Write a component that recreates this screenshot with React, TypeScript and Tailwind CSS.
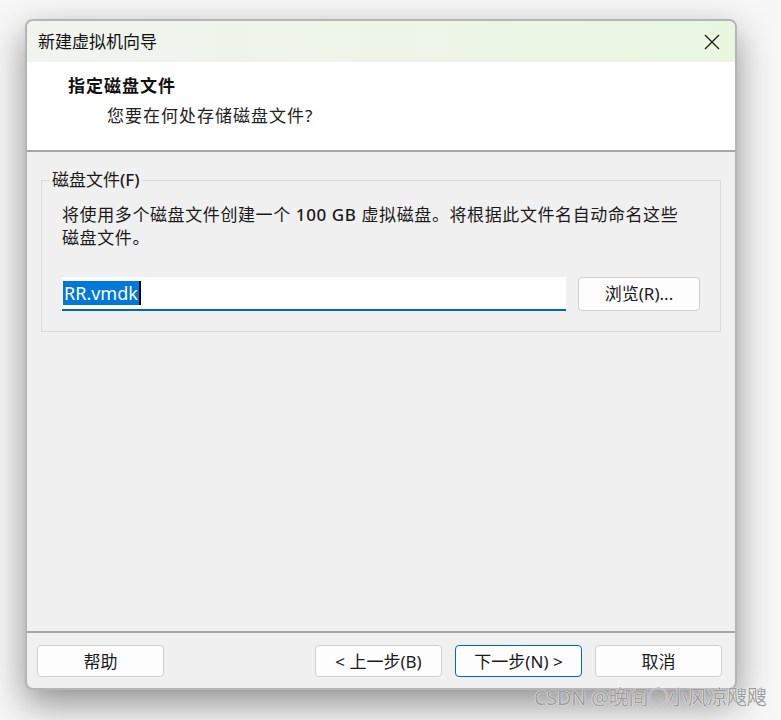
import React from 'react'

const cjk = { fontFamily: '"Noto Sans", "Noto Sans CJK SC", sans-serif' }

const Btn = ({ label, primary = false }: { label: string; primary?: boolean }) => (
  <button
    className={`h-[32px] w-[127px] rounded-[4px] border bg-[#fdfdfd] text-[17px] leading-none text-[#1a1a1a] ${
      primary ? 'border-[#0067c0]' : 'border-[#d0d0d0]'
    }`}
  >
    {label}
  </button>
)

export default function App() {
  return (
    <div className="relative h-[720px] w-[781px] overflow-hidden bg-[#f7f7f7]" style={cjk}>
      <div className="pl-[25px] pt-[19px]">
        <div className="flex h-[671px] w-[712px] flex-col overflow-hidden rounded-[8px] border-2 border-[#b5b5b5] bg-[#f0f0f0] shadow-[0_14px_36px_rgba(0,0,0,0.42)]">
          {/* title bar */}
          <div className="flex h-[41px] shrink-0 items-center justify-between bg-gradient-to-r from-[#f1f3ef] to-[#e9f7e1] pl-[11px] pr-[14px]">
            <span className="text-[17px] text-[#111]">新建虚拟机向导</span>
            <svg width="18" height="18" viewBox="0 0 18 18" className="text-[#1a1a1a]">
              <path d="M2 2 L16 16 M16 2 L2 16" stroke="currentColor" strokeWidth="1.3" fill="none" />
            </svg>
          </div>

          {/* header */}
          <div className="h-[90px] shrink-0 border-b-2 border-[#a6a6a6] bg-white pt-[12px]">
            <div className="pl-[41px] text-[17px] font-bold leading-[24px] tracking-[1px] text-[#111]">指定磁盘文件</div>
            <div className="mt-[6px] pl-[80px] text-[17px] leading-[24px] tracking-[1px] text-[#222]">您要在何处存储磁盘文件?</div>
          </div>

          {/* body */}
          <div className="flex-1 px-[14px] pt-[28px]">
            <div className="relative h-[152px] w-[680px] border border-[#dadada] px-[20px] pt-[22px]">
              <span className="absolute left-[8px] top-[-12px] bg-[#f0f0f0] px-[2px] text-[17px] leading-[22px] text-[#1a1a1a]">
                磁盘文件<span className="font-medium">(F)</span>
              </span>
              <p className="text-[17px] leading-[23px] tracking-[0.6px] text-[#1a1a1a]">
                将使用多个磁盘文件创建一个 <span className="font-medium">100 GB</span> 虚拟磁盘。将根据此文件名自动命名这些
                <br />
                磁盘文件。
              </p>
              <div className="mt-[28px] flex items-center gap-[12px]">
                <div className="flex h-[34px] w-[504px] items-center border-b-2 border-[#0067c0] bg-white pl-[1px]">
                  <span className="bg-[#0078d7] px-[1px] text-[18px] leading-[24px] text-white">RR.vmdk</span>
                  <span className="h-[24px] w-[2px] bg-black" />
                </div>
                <button className="h-[34px] w-[122px] rounded-[4px] border border-[#d0d0d0] bg-[#fdfdfd] text-[17px] text-[#1a1a1a]">
                  浏览(R)...
                </button>
              </div>
            </div>
          </div>

          {/* footer */}
          <div className="flex shrink-0 items-center justify-between border-t-2 border-[#a6a6a6] px-[10px] pb-[11px] pt-[12px] pr-[13px]">
            <Btn label="帮助" />
            <div className="flex gap-[13px]">
              <Btn label="< 上一步(B)" />
              <Btn label="下一步(N) >" primary />
              <Btn label="取消" />
            </div>
          </div>
        </div>
      </div>

      {/* watermark */}
      <div
        className="absolute left-[534px] top-[683px] text-[20px] tracking-[-0.3px] text-[#9c9c9c]"
        style={{ textShadow: '0 0 1px #fff, 0 0 1px #fff' }}
      >
        CSDN @晚间◯小风凉飕飕
      </div>
    </div>
  )
}
